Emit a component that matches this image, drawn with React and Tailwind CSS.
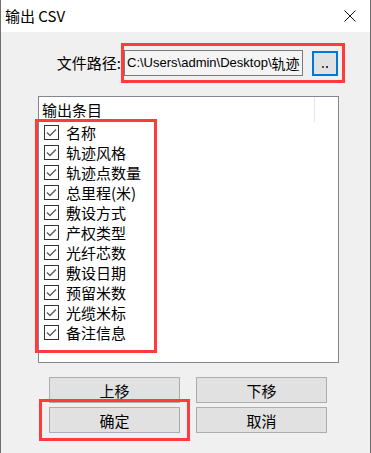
import React from 'react';

const items = [
  '名称',
  '轨迹风格',
  '轨迹点数量',
  '总里程(米)',
  '敷设方式',
  '产权类型',
  '光纤芯数',
  '敷设日期',
  '预留米数',
  '光缆米标',
  '备注信息',
];

const cjk = { fontFamily: '"Noto Sans CJK SC", "Noto Sans", sans-serif' };

// plain win32-style push button
const Btn = ({ children }) => (
  <button className="w-[131px] h-[26px] bg-[#e1e1e1] border border-[#adadad] text-[15px] leading-none text-black flex items-center justify-center">
    {children}
  </button>
);

const CheckRow = ({ label }) => (
  <div className="h-[20px] flex items-center">
    <div className="w-[15px] h-[15px] border border-[#333333] bg-white flex items-center justify-center">
      <svg width="11" height="9" viewBox="0 0 11 9" fill="none">
        <path d="M1 4.5 L4 7.5 L10 1.5" stroke="#5a5a5a" strokeWidth="1.3" />
      </svg>
    </div>
    <span className="ml-[7px] text-[15px] leading-none text-black">{label}</span>
  </div>
);

export default function App() {
  return (
    <div
      className="relative w-[371px] h-[453px] bg-[#f0f0f0] border-x border-[#6f6f6f] flex flex-col"
      style={cjk}
    >
      {/* Title bar */}
      <div className="h-[32px] bg-white flex items-center justify-between pl-[4px] pr-[14px] shrink-0">
        <span className="text-[15px] text-black">输出 CSV</span>
        <svg width="12" height="12" viewBox="0 0 12 12">
          <path d="M0.5 0.5 L11.5 11.5 M11.5 0.5 L0.5 11.5" stroke="#111" strokeWidth="1" />
        </svg>
      </div>

      {/* File path row */}
      <div className="mt-[18px] h-[26px] flex items-center">
        <div className="w-[123px] pr-[3px] text-right text-[15px] text-black">文件路径:</div>
        <div
          className="w-[179px] h-[26px] border border-[#7a7a7a] bg-[#f4f4f4] flex items-center pl-[2px] whitespace-nowrap text-[13px] text-black"
          style={{ fontFamily: '"Liberation Sans", "Noto Sans CJK SC", sans-serif' }}
        >
          C:\Users\admin\Desktop\<span className="text-[14px]" style={cjk}>轨迹</span>
        </div>
        <button className="ml-[9px] w-[26px] h-[25px] border-2 border-[#0078d7] bg-[#e1e1e1] flex items-end justify-center pb-[6px]">
          <span className="flex gap-[2px]">
            <span className="w-[2px] h-[2px] bg-[#7a4a20]" />
            <span className="w-[2px] h-[2px] bg-[#2a3a6a]" />
          </span>
        </button>
      </div>

      {/* Field list */}
      <div className="mt-[20px] ml-[37px] w-[301px] h-[267px] border border-[#828790] bg-white flex flex-col">
        <div className="h-[25px] flex items-center relative">
          <span className="ml-[3px] text-[15px] leading-none text-black">输出条目</span>
          <div className="absolute left-[275px] top-0 h-[25px] w-px bg-[#e5e5e5]" />
        </div>
        <div className="ml-[5px] flex flex-col">
          {items.map((t) => (
            <CheckRow key={t} label={t} />
          ))}
        </div>
      </div>

      {/* Buttons */}
      <div className="mt-[14px] ml-[48px] grid grid-cols-[131px_131px] gap-x-[16px] gap-y-[4px]">
        <Btn>上移</Btn>
        <Btn>下移</Btn>
        <Btn>确定</Btn>
        <Btn>取消</Btn>
      </div>

      {/* Red annotation boxes */}
      <div className="absolute left-[120px] top-[43px] w-[224px] h-[40px] border-[3px] border-[#ff3b3b] pointer-events-none" />
      <div className="absolute left-[34px] top-[119px] w-[122px] h-[234px] border-[3px] border-[#ff3b3b] pointer-events-none" />
      <div className="absolute left-[38px] top-[399px] w-[151px] h-[42px] border-[3px] border-[#ff3b3b] pointer-events-none" />
    </div>
  );
}
